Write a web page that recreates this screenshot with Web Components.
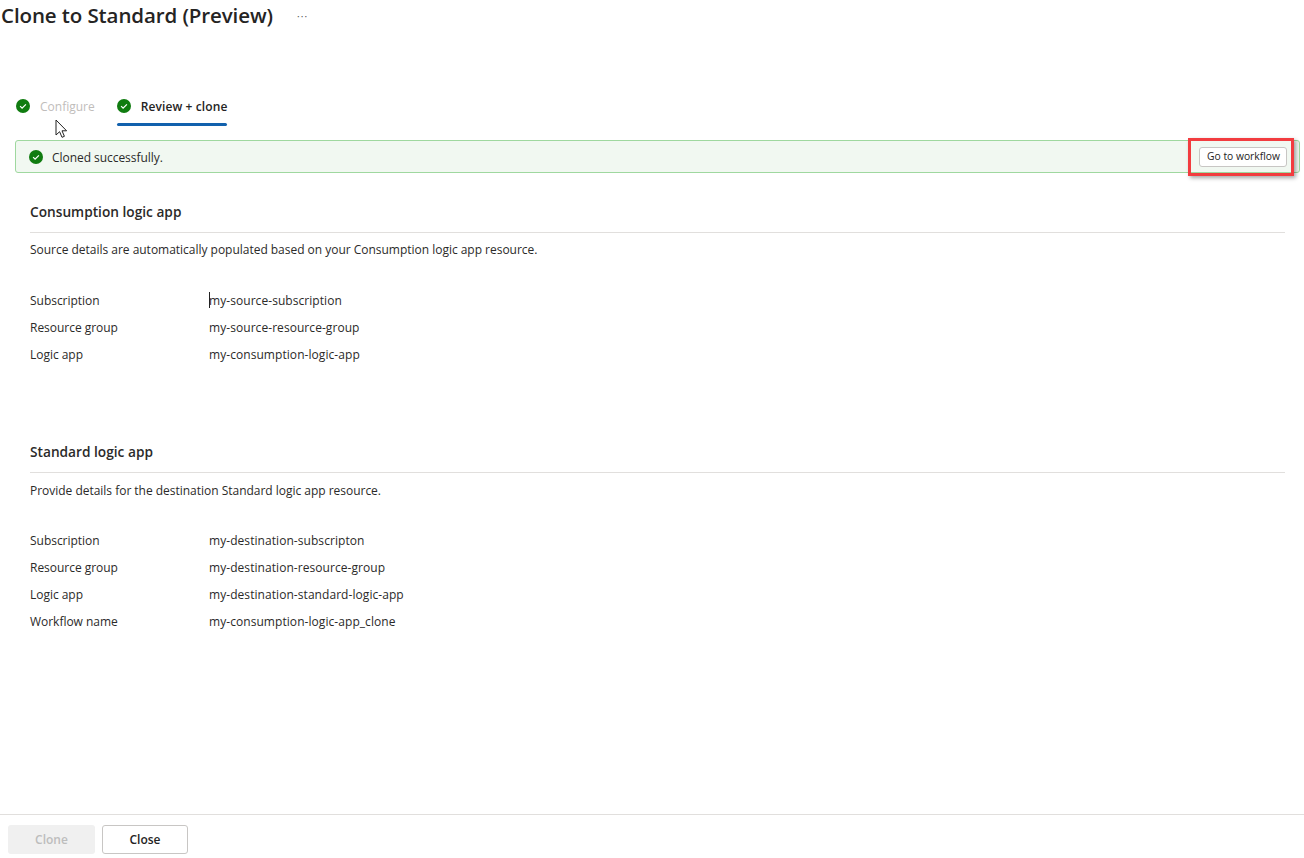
<!DOCTYPE html>
<html>
<head>
<meta charset="utf-8">
<title>Clone to Standard</title>
<style>
html,body{margin:0;padding:0;background:#fff;}
body{font-family:"Open Sans","Noto Sans",sans-serif;color:#2b2a29;overflow:hidden;}
</style>
</head>
<body>
<clone-page>
  <page-title slot="title">Clone to Standard (Preview)</page-title>
  <step-tabs slot="tabs">
    <step-tab dim>Configure</step-tab>
    <step-tab active>Review + clone</step-tab>
  </step-tabs>
  <status-banner slot="banner">Cloned successfully.</status-banner>

  <detail-section heading="Consumption logic app" desc="Source details are automatically populated based on your Consumption logic app resource.">
    <detail-row label="Subscription" value="my-source-subscription" caret></detail-row>
    <detail-row label="Resource group" value="my-source-resource-group"></detail-row>
    <detail-row label="Logic app" value="my-consumption-logic-app"></detail-row>
  </detail-section>
  <detail-section class="second" heading="Standard logic app" desc="Provide details for the destination Standard logic app resource.">
    <detail-row label="Subscription" value="my-destination-subscripton"></detail-row>
    <detail-row label="Resource group" value="my-destination-resource-group"></detail-row>
    <detail-row label="Logic app" value="my-destination-standard-logic-app"></detail-row>
    <detail-row label="Workflow name" value="my-consumption-logic-app_clone"></detail-row>
  </detail-section>

  <action-footer slot="footer"></action-footer>
</clone-page>

<script>
const CHECK = `<svg width="14" height="14" viewBox="0 0 14 14" style="display:block"><circle cx="7" cy="7" r="7" fill="#107c10"/><path d="M4.1 7.2l2 2 3.8-3.9" fill="none" stroke="#fff" stroke-width="1.2"/></svg>`;

function el(name, css, html){
  customElements.define(name, class extends HTMLElement{
    connectedCallback(){
      if(this.shadowRoot) return;
      this.attachShadow({mode:"open"}).innerHTML = `<style>${css}</style>${typeof html === "function" ? html(this) : html}`;
    }
  });
}

el("clone-page", `
  :host{display:flex;flex-direction:column;position:relative;width:1304px;height:858px;box-sizing:border-box;}
  .main{flex:1;display:flex;flex-direction:column;}
  .cursor{position:absolute;left:55px;top:119px;}
`, `
  <slot name="title"></slot>
  <slot name="tabs"></slot>
  <slot name="banner"></slot>
  <div class="main"><slot></slot></div>
  <slot name="footer"></slot>
  <svg class="cursor" width="14" height="20" viewBox="0 0 14 20"><path d="M1 1v15l3.6-3.3 2.4 5.6 2.4-1-2.4-5.5h4.6z" fill="#fff" stroke="#222" stroke-width="1"/></svg>
`);

el("page-title", `
  :host{display:flex;align-items:center;height:29px;margin-bottom:4px;padding-left:1px;font-size:20.5px;font-weight:600;color:#252423;letter-spacing:-.1px;}
  .more{margin-left:24px;font-size:10px;font-weight:400;color:#555;letter-spacing:1.1px;transform:translateY(1px);}
`, `<slot></slot><span class="more">···</span>`);

el("step-tabs", `
  :host{display:flex;gap:22px;margin:55px 0 0 16px;height:53px;box-sizing:border-box;}
`, `<slot></slot>`);

el("step-tab", `
  :host{display:flex;align-items:flex-start;gap:10px;height:37px;box-sizing:border-box;padding-top:11px;font-size:12px;line-height:16px;color:#252423;font-weight:600;position:relative;}
  :host([dim]){color:#bfbdbb;font-weight:400;}
  :host([active]){letter-spacing:.1px;}
  :host([active])::after{content:"";position:absolute;left:0;right:0;bottom:-1px;height:3px;background:#1261ad;border-radius:2px;}
`, `<span class="ic">${CHECK}</span><slot></slot>`);

el("status-banner", `
  :host{display:flex;align-items:center;position:relative;box-sizing:border-box;margin-left:15px;width:1285px;height:33px;margin-top:-1px;padding-left:13px;background:#f1f8f1;border:1px solid #9fd89f;border-radius:3px;font-size:12px;letter-spacing:-.05px;color:#2b2a29;}
  .ic{margin-right:9px;}
  .txt{transform:translateY(1px);}
  button{position:absolute;right:12px;top:6px;width:88px;height:20px;padding:0 0 2px 1px;background:#fff;border:1px solid #c8c6c4;border-radius:3px;font:10.3px "Open Sans",sans-serif;color:#252423;}
  .mark{position:absolute;left:1172px;top:-3px;width:106px;height:38px;box-sizing:border-box;border:3px solid #f23c3f;box-shadow:2px 2px 4px rgba(0,0,0,.35);}
`, `<span class="ic">${CHECK}</span><span class="txt"><slot></slot></span><button>Go to workflow</button><div class="mark"></div>`);

el("detail-section", `
  :host{display:block;padding:0 19px 0 30px;margin-top:30px;}
  :host(.second){margin-top:75px;}
  h2{margin:0;font-size:13.7px;line-height:18px;font-weight:600;color:#2b2a29;padding-bottom:11px;border-bottom:1px solid #e1dfdd;}
  p{margin:9px 0 0;font-size:12px;line-height:16px;letter-spacing:-.02px;}
  :host(.second) p{margin-top:10px;}
  .rows{margin-top:29px;display:flex;flex-direction:column;}
  :host(.second) .rows{margin-top:28px;}
`, h => `<h2>${h.getAttribute("heading")}</h2><p>${h.getAttribute("desc")}</p><div class="rows"><slot></slot></div>`);

el("detail-row", `
  :host{display:grid;grid-template-columns:179px 1fr;height:27px;font-size:12px;line-height:27px;}
  .l{letter-spacing:-.03px;}
  .v{position:relative;letter-spacing:.06px;}
  .caret{position:absolute;left:0;top:5px;width:1px;height:16px;background:#222;}
`, r => `<span class="l">${r.getAttribute("label")}</span><span class="v">${r.hasAttribute("caret") ? '<i class="caret"></i>' : ""}${r.getAttribute("value")}</span>`);

el("action-footer", `
  :host{display:flex;gap:7px;height:44px;box-sizing:border-box;border-top:1px solid #e1dfdd;padding:10px 0 0 8px;}
  button{height:29px;padding:0;border-radius:3px;font:600 12px "Open Sans",sans-serif;}
  .clone{width:87px;background:#f0f0f0;border:0;color:#bdbdbd;}
  .close{width:86px;background:#fff;border:1px solid #c8c6c4;color:#252423;}
`, `<button class="clone" disabled>Clone</button><button class="close">Close</button>`);
</script>
</body>
</html>
